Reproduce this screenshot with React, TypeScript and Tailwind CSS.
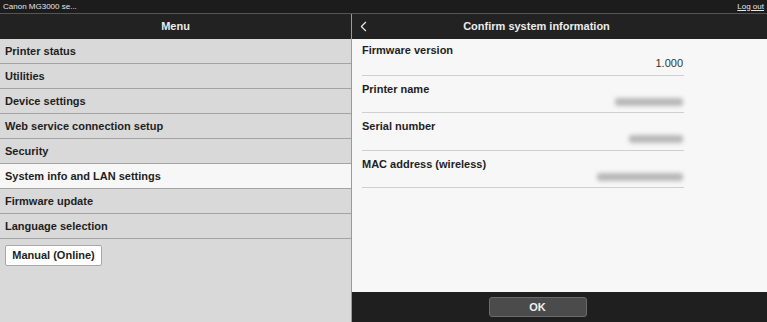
import { ChevronLeft } from "lucide-react";

const menu = [
  "Printer status",
  "Utilities",
  "Device settings",
  "Web service connection setup",
  "Security",
  "System info and LAN settings",
  "Firmware update",
  "Language selection",
];

const info = [
  { label: "Firmware version", value: "1.000", blur: 0 },
  { label: "Printer name", value: "", blur: 68 },
  { label: "Serial number", value: "", blur: 54 },
  { label: "MAC address (wireless)", value: "", blur: 86 },
];

export default function App() {
  return (
    <div
      className="flex h-[322px] w-[767px] flex-col overflow-hidden bg-[#1f1f1f] text-[11px]"
      style={{ fontFamily: '"Liberation Sans", Arial, sans-serif' }}
    >
      {/* top strip */}
      <div className="flex h-[14px] items-center justify-between border-b border-[#555] bg-[#1c1c1c] px-[3px] text-[8px] text-[#e6e6e6]">
        <span>Canon MG3000 se...</span>
        <a href="#" className="underline">
          Log out
        </a>
      </div>

      <div className="flex min-h-0 flex-1">
        {/* left menu */}
        <div className="flex w-[351px] flex-col">
          <div className="flex h-[25px] items-center justify-center bg-[#222] font-bold text-[#ececec]">
            Menu
          </div>
          <div className="flex-1 bg-[#d9d9d9]">
            {menu.map((m) => (
              <div
                key={m}
                className={
                  "flex h-[25px] items-center border-b border-[#a3a3a3] px-[5px] font-bold text-[#1e1e1e] " +
                  (m === "System info and LAN settings" ? "bg-[#f7f7f7]" : "")
                }
              >
                {m}
              </div>
            ))}
            <button className="ml-[5px] mt-[6px] h-[21px] w-[97px] rounded-[2px] border border-[#a8a8a8] bg-white font-bold text-[#1e1e1e]">
              Manual (Online)
            </button>
          </div>
        </div>

        {/* right panel */}
        <div className="flex flex-1 flex-col border-l border-[#9a9a9a]">
          <div className="relative flex h-[25px] items-center justify-center bg-[#222] pr-[46px] font-bold text-[#ececec]">
            <ChevronLeft className="absolute left-[3px] top-[4px] h-[17px] w-[17px]" strokeWidth={1.6} />
            Confirm system information
          </div>
          <div className="flex-1 bg-[#f7f7f7] pl-[10px]">
            <div className="w-[322px]">
              {info.map((r, i) => (
                <div
                  key={r.label}
                  className={
                    "flex flex-col border-b border-[#cfcfcf] " +
                    (i === 0 ? "h-[36.5px] pt-[5px]" : "h-[37.5px] pt-[7px]")
                  }
                >
                  <div className="font-bold leading-[12px] text-[#1e1e1e]">{r.label}</div>
                  <div className="flex h-[14px] items-center justify-end pr-[1px] text-[#333]">
                    {r.blur ? (
                      <div
                        className="h-[8px] rounded-[3px] bg-[#b8b8b8] blur-[2px]"
                        style={{ width: r.blur }}
                      />
                    ) : (
                      r.value
                    )}
                  </div>
                </div>
              ))}
            </div>
          </div>
          <div className="flex h-[30px] items-center justify-center bg-[#1f1f1f] pr-[44px]">
            <button className="h-[20px] w-[98px] rounded-[3px] border border-[#6a6a6a] bg-[#4b4b4b] font-bold text-[#f0f0f0]">
              OK
            </button>
          </div>
        </div>
      </div>
    </div>
  );
}
